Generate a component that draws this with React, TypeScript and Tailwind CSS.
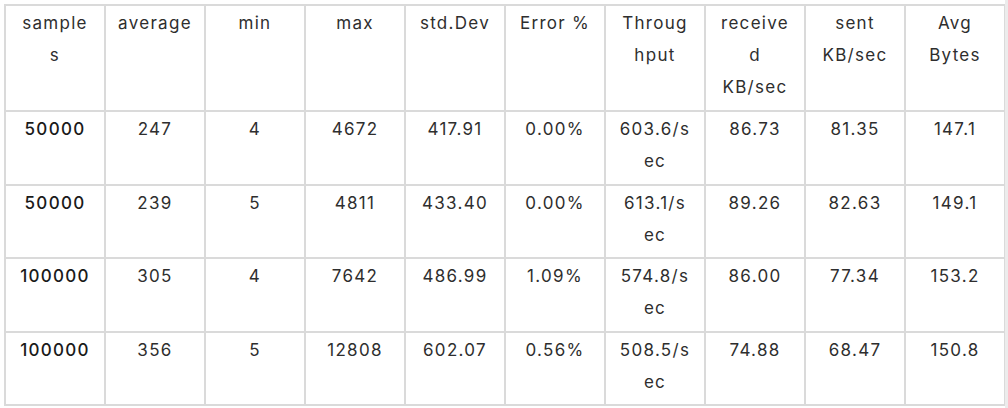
const headers: string[][] = [
  ["sample", "s"],
  ["average"],
  ["min"],
  ["max"],
  ["std.Dev"],
  ["Error %"],
  ["Throug", "hput"],
  ["receive", "d", "KB/sec"],
  ["sent", "KB/sec"],
  ["Avg", "Bytes"],
];

const rows: string[][][] = [
  [["50000"], ["247"], ["4"], ["4672"], ["417.91"], ["0.00%"], ["603.6/s", "ec"], ["86.73"], ["81.35"], ["147.1"]],
  [["50000"], ["239"], ["5"], ["4811"], ["433.40"], ["0.00%"], ["613.1/s", "ec"], ["89.26"], ["82.63"], ["149.1"]],
  [["100000"], ["305"], ["4"], ["7642"], ["486.99"], ["1.09%"], ["574.8/s", "ec"], ["86.00"], ["77.34"], ["153.2"]],
  [["100000"], ["356"], ["5"], ["12808"], ["602.07"], ["0.56%"], ["508.5/s", "ec"], ["74.88"], ["68.47"], ["150.8"]],
];

function Lines({ lines }: { lines: string[] }) {
  return (
    <>
      {lines.map((l, i) => (
        <div key={i} className="whitespace-nowrap">
          {l}
        </div>
      ))}
    </>
  );
}

export default function App() {
  return (
    <div
      className="relative w-[1008px] h-[408px] bg-white pl-1 pt-1 text-[17px] leading-[32px] tracking-[1.3px] text-[#2e2e2e]"
      style={{ fontFamily: "Inter, 'Liberation Sans', sans-serif" }}
    >
      <table className="table-fixed border-separate border-spacing-0 w-[1002px] border-l-2 border-t-2 border-[#dadada]">
        <colgroup>
          {headers.map((_, i) => (
            <col key={i} className="w-[100px]" />
          ))}
        </colgroup>
        <thead>
          <tr>
            {headers.map((h, i) => (
              <th
                key={i}
                className="border-r-2 border-b-2 border-[#dadada] px-1 pt-[1px] pb-[7px] align-top text-center font-normal"
              >
                <Lines lines={h} />
              </th>
            ))}
          </tr>
        </thead>
        <tbody>
          {rows.map((r, ri) => (
            <tr key={ri}>
              {r.map((c, ci) => (
                <td
                  key={ci}
                  className={
                    ci === 0
                      ? "border-r-2 border-b-2 border-[#dadada] px-1 pt-[1px] pb-[6.5px] align-top text-center font-medium text-[#1a1a1a]"
                      : "border-r-2 border-b-2 border-[#dadada] px-1 pt-[1px] pb-[6.5px] align-top text-center"
                  }
                >
                  <Lines lines={c} />
                </td>
              ))}
            </tr>
          ))}
        </tbody>
      </table>
      <div className="absolute right-0 top-0 h-full w-[3px] bg-[#ececec]" />
    </div>
  );
}
